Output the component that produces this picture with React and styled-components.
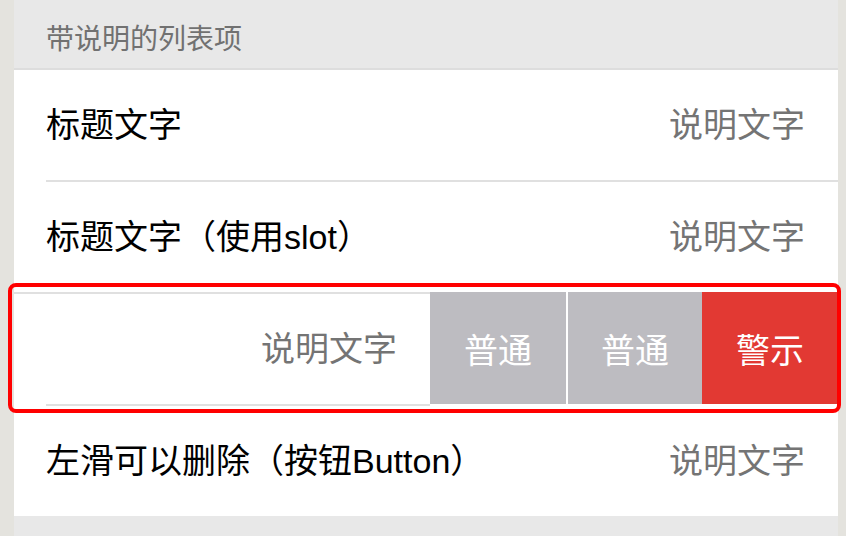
import styled, { createGlobalStyle } from "styled-components";

const GlobalStyle = createGlobalStyle`
  html, body {
    margin: 0;
    padding: 0;
    background: #e4e3de;
  }

  body {
    font-family: "Liberation Sans", "Noto Sans CJK SC", sans-serif;
  }
`;

const rows = [
  { title: "标题文字", desc: "说明文字" },
  { title: "标题文字（使用slot）", desc: "说明文字" },
];

const actions = [
  { label: "普通", tone: "gray" },
  { label: "普通", tone: "gray", divided: true },
  { label: "警示", tone: "red" },
];

const App = () => {
  return (
    <>
      <GlobalStyle />
      <Page>
        <Panel>
          <SectionTitle>带说明的列表项</SectionTitle>

          <List>
            {rows.map((row, i) => (
              <Cell key={i}>
                <CellBody>
                  <Title>{row.title}</Title>
                  <Desc>{row.desc}</Desc>
                </CellBody>
              </Cell>
            ))}

            <SwipeCell>
              <SwipeContent>
                <CellBody>
                  <span />
                  <Desc>说明文字</Desc>
                </CellBody>
              </SwipeContent>

              <Actions>
                {actions.map((a, i) => (
                  <ActionButton key={i} $tone={a.tone} $divided={a.divided}>
                    {a.label}
                  </ActionButton>
                ))}
              </Actions>

              <Highlight />
            </SwipeCell>

            <Cell>
              <CellBody $last>
                <Title>左滑可以删除（按钮Button）</Title>
                <Desc>说明文字</Desc>
              </CellBody>
            </Cell>
          </List>
        </Panel>
      </Page>
    </>
  );
};

const Page = styled.div`
  display: flex;
  padding: 0 8px 0 14px;
  min-height: 536px;
  box-sizing: border-box;
`;

const Panel = styled.div`
  flex: 1;
  background: #e8e8e8;
  display: flex;
  flex-direction: column;
`;

const SectionTitle = styled.div`
  padding: 26px 32px 14px;
  font-size: 28px;
  line-height: 28px;
  color: #717171;
  border-bottom: 2px solid #dddddd;
`;

const List = styled.div`
  background: #ffffff;
  display: flex;
  flex-direction: column;
`;

const Cell = styled.div`
  background: #ffffff;
  padding-left: 32px;
`;

const CellBody = styled.div`
  height: 110px;
  display: flex;
  align-items: center;
  justify-content: space-between;
  padding-right: 33px;
  border-bottom: 2px solid ${(p) => (p.$last ? "transparent" : "#e0e0e0")};
  margin-bottom: ${(p) => (p.$last ? "-2px" : "0")};
`;

const Title = styled.span`
  font-size: 34px;
  line-height: 40px;
  color: #000000;
  white-space: nowrap;
`;

const Desc = styled.span`
  font-size: 34px;
  line-height: 40px;
  color: #747474;
  white-space: nowrap;
`;

const SwipeCell = styled.div`
  position: relative;
  display: flex;
  align-items: flex-start;
  background: #ffffff;
  margin-top: -2px;
`;

const SwipeContent = styled.div`
  flex: 1;
  padding-left: 32px;
  border-top: 2px solid #e0e0e0;
`;

const Actions = styled.div`
  display: flex;
  height: 112px;
`;

const ActionButton = styled.div`
  width: 136px;
  display: flex;
  align-items: center;
  justify-content: center;
  box-sizing: border-box;
  font-size: 34px;
  color: #ffffff;
  background: ${(p) => (p.$tone === "red" ? "#e23933" : "#bdbcc1")};
  border-left: ${(p) => (p.$divided ? "2px solid #ffffff" : "none")};
`;

const Highlight = styled.div`
  position: absolute;
  left: -6px;
  top: -9px;
  right: -3px;
  bottom: -7px;
  border: 4px solid #ff0000;
  border-radius: 8px;
  pointer-events: none;
`;

export default App;
